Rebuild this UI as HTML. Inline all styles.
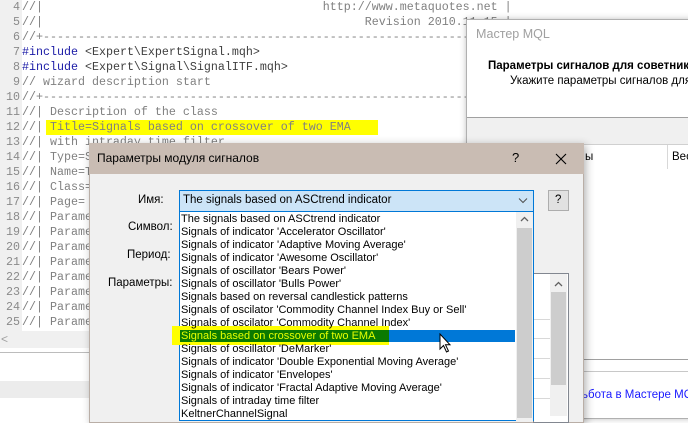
<!DOCTYPE html>
<html><head><meta charset="utf-8"><style>
*{margin:0;padding:0;box-sizing:border-box}
body{width:688px;height:416px;position:relative;overflow:hidden;background:#fff;font-family:"Liberation Sans",sans-serif}
.abs{position:absolute}
#gut{left:0;top:0;width:22px;height:331px;background:#f0f0f0}
.ln{position:absolute;left:0;width:20px;text-align:right;font:11.67px "Liberation Mono",monospace;color:#8a8a8a;line-height:15px}
.cd{position:absolute;left:22px;font:11.67px "Liberation Mono",monospace;color:#808080;line-height:15px;white-space:pre}
.inc{color:#1a1aa6}
.dk{color:#404040}
.ui{font-family:"Liberation Sans","Noto Sans CJK SC",sans-serif;font-size:11.5px;color:#000;white-space:nowrap}
.li{position:absolute;left:181px;height:13px;line-height:13px;font-size:11px;font-family:"Liberation Sans",sans-serif;white-space:nowrap}
</style></head><body>
<div id="gut" class="abs"></div>
<div class="abs" style="left:46px;top:120px;width:332px;height:15px;background:#ffff00"></div>

<div class="ln" style="top:0">4</div><div class="cd" style="top:0">//|                                        http://www.metaquotes.net |</div>
<div class="ln" style="top:15px">5</div><div class="cd" style="top:15px">//|                                              Revision 2010.11.15 |</div>
<div class="ln" style="top:30px">6</div><div class="cd" style="top:30px">//+------------------------------------------------------------------+</div>
<div class="ln" style="top:45px">7</div><div class="cd" style="top:45px"><span class="inc">#include</span> <span class="dk">&lt;Expert\ExpertSignal.mqh&gt;</span></div>
<div class="ln" style="top:60px">8</div><div class="cd" style="top:60px"><span class="inc">#include</span> <span class="dk">&lt;Expert\Signal\SignalITF.mqh&gt;</span></div>
<div class="ln" style="top:75px">9</div><div class="cd" style="top:75px">// wizard description start</div>
<div class="ln" style="top:90px">10</div><div class="cd" style="top:90px">//+------------------------------------------------------------------+</div>
<div class="ln" style="top:105px">11</div><div class="cd" style="top:105px">//| Description of the class</div>
<div class="ln" style="top:120px">12</div><div class="cd" style="top:120px">//| Title=Signals based on crossover of two EMA</div>
<div class="ln" style="top:135px">13</div><div class="cd" style="top:135px">//| with intraday time filter</div>
<div class="ln" style="top:150px">14</div><div class="cd" style="top:150px">//| Type=SignalAdvanced</div>
<div class="ln" style="top:165px">15</div><div class="cd" style="top:165px">//| Name=T</div>
<div class="ln" style="top:180px">16</div><div class="cd" style="top:180px">//| Class=</div>
<div class="ln" style="top:195px">17</div><div class="cd" style="top:195px">//| Page=</div>
<div class="ln" style="top:210px">18</div><div class="cd" style="top:210px">//| Parameter</div>
<div class="ln" style="top:225px">19</div><div class="cd" style="top:225px">//| Parameter</div>
<div class="ln" style="top:240px">20</div><div class="cd" style="top:240px">//| Parameter</div>
<div class="ln" style="top:255px">21</div><div class="cd" style="top:255px">//| Parameter</div>
<div class="ln" style="top:270px">22</div><div class="cd" style="top:270px">//| Parameter</div>
<div class="ln" style="top:285px">23</div><div class="cd" style="top:285px">//| Parameter</div>
<div class="ln" style="top:300px">24</div><div class="cd" style="top:300px">//| Parameter</div>
<div class="ln" style="top:315px">25</div><div class="cd" style="top:315px">//| Parameter</div>

<div class="abs" style="left:0;top:331px;width:100px;height:17px;background:#f0f0f0;color:#a0a0a0;font-size:12px;padding-left:1px;line-height:17px">&lt;</div>
<div class="abs" style="left:0;top:352px;width:100px;height:1px;background:#bcbcbc"></div>
<div class="abs" style="left:0;top:381px;width:100px;height:17px;background:#ececec"></div>

<!-- Master MQL window -->
<div class="abs" style="left:466px;top:19px;width:230px;height:400px;background:#fff;border:1px solid #b0b0b0;box-shadow:0 0 6px rgba(0,0,0,.25)"></div>
<div class="abs ui" style="left:476px;top:27px;color:#a0a0a0;font-size:12.5px">Мастер MQL</div>
<div class="abs ui" style="left:488px;top:60px;font-weight:bold;font-size:11.5px">Параметры сигналов для советника</div>
<div class="abs ui" style="left:510px;top:75px">Укажите параметры сигналов для</div>
<div class="abs" style="left:467px;top:117px;width:230px;height:1px;background:#a0a0a0"></div>
<div class="abs" style="left:467px;top:118px;width:230px;height:26px;background:#f0f0f0"></div>
<div class="abs" style="left:467px;top:144px;width:230px;height:1px;background:#d0d0d0"></div>
<div class="abs" style="left:667px;top:145px;width:1px;height:24px;background:#d8d8d8"></div>
<div class="abs ui" style="left:585px;top:151px">ы</div>
<div class="abs ui" style="left:672px;top:151px">Вес</div>
<div class="abs" style="left:584px;top:359px;width:110px;height:1px;background:#a0a0a0"></div>
<div class="abs" style="left:584px;top:371px;width:110px;height:1px;background:#c8c8c8"></div>
<div class="abs ui" style="left:582px;top:389px;color:#1a1aff">ьбота в Мастере MQL</div>

<!-- Dialog -->
<div class="abs" style="left:89px;top:143px;width:495px;height:280px;background:#f0f0f0;border:1px solid #b9aea6;box-shadow:2px 2px 8px rgba(0,0,0,.3)"></div>
<div class="abs" style="left:89px;top:143px;width:495px;height:31px;background:#c9bcb3"></div>
<div class="abs ui" style="left:97px;top:151px;font-size:12px">Параметры модуля сигналов</div>
<div class="abs ui" style="left:512px;top:150px;font-size:13px">?</div>
<svg class="abs" style="left:555px;top:153px" width="12" height="12"><path d="M1 1L11 11M11 1L1 11" stroke="#000" stroke-width="1.1"/></svg>

<div class="abs ui" style="left:138px;top:194px">Имя:</div>
<div class="abs ui" style="left:128px;top:221px">Символ:</div>
<div class="abs ui" style="left:127px;top:249px">Период:</div>
<div class="abs ui" style="left:108px;top:277px">Параметры:</div>

<div class="abs" style="left:548px;top:190px;width:21px;height:21px;background:#e1e1e1;border:1px solid #adadad"></div>
<div class="abs ui" style="left:555px;top:194px">?</div>

<!-- param grid behind -->
<div class="abs" style="left:533px;top:273px;width:36px;height:150px;background:#fff;border:1px solid #828790"></div>
<div class="abs" style="left:534px;top:319px;width:16px;height:1px;background:#d8d8d8"></div>
<div class="abs" style="left:534px;top:338px;width:16px;height:1px;background:#d8d8d8"></div>
<div class="abs" style="left:534px;top:358px;width:16px;height:1px;background:#d8d8d8"></div>
<div class="abs" style="left:534px;top:378px;width:16px;height:1px;background:#d8d8d8"></div>
<div class="abs" style="left:534px;top:398px;width:16px;height:1px;background:#d8d8d8"></div>
<div class="abs" style="left:550px;top:274px;width:17px;height:142px;background:#f0f0f0"></div>
<div class="abs" style="left:551px;top:292px;width:15px;height:93px;background:#cdcdcd"></div>
<svg class="abs" style="left:554px;top:281px" width="9" height="6"><path d="M1 5L4.5 1.5L8 5" stroke="#606060" fill="none" stroke-width="1.3"/></svg>

<!-- combo -->
<div class="abs" style="left:179px;top:190px;width:355px;height:22px;background:#cce4f7;border:1px solid #0078d7"></div>
<div class="abs ui" style="left:183px;top:194px">The signals based on ASCtrend indicator</div>
<svg class="abs" style="left:518px;top:197px" width="10" height="7"><path d="M1 1.5L5 5.5L9 1.5" stroke="#505050" fill="none" stroke-width="1"/></svg>

<!-- dropdown list -->
<div class="abs" style="left:179px;top:211px;width:355px;height:210px;background:#fff;border:1px solid #0078d7"></div>
<div class="abs" style="left:516px;top:212px;width:17px;height:210px;background:#f0f0f0"></div>
<div class="abs" style="left:517px;top:228px;width:15px;height:190px;background:#cdcdcd"></div>
<svg class="abs" style="left:520px;top:216px" width="9" height="6"><path d="M1 5L4.5 1.5L8 5" stroke="#606060" fill="none" stroke-width="1.3"/></svg>

<div class="abs" style="left:172px;top:326px;width:217px;height:19px;background:#ffff00"></div>
<div class="abs" style="left:180px;top:330px;width:335px;height:12px;background:#0078d7"></div>
<div class="abs" style="left:180px;top:330px;width:209px;height:12px;background:#0b7a00"></div>

<div class="li" style="top:213px">The signals based on ASCtrend indicator</div>
<div class="li" style="top:226px">Signals of indicator 'Accelerator Oscillator'</div>
<div class="li" style="top:239px">Signals of indicator 'Adaptive Moving Average'</div>
<div class="li" style="top:252px">Signals of indicator 'Awesome Oscillator'</div>
<div class="li" style="top:265px">Signals of oscillator 'Bears Power'</div>
<div class="li" style="top:278px">Signals of oscillator 'Bulls Power'</div>
<div class="li" style="top:291px">Signals based on reversal candlestick patterns</div>
<div class="li" style="top:304px">Signals of oscilator 'Commodity Channel Index Buy or Sell'</div>
<div class="li" style="top:317px">Signals of oscilator 'Commodity Channel Index'</div>
<div class="li" style="top:330px;color:#e6ff00">Signals based on crossover of two EMA</div>
<div class="li" style="top:343px">Signals of oscillator 'DeMarker'</div>
<div class="li" style="top:356px">Signals of indicator 'Double Exponential Moving Average'</div>
<div class="li" style="top:369px">Signals of indicator 'Envelopes'</div>
<div class="li" style="top:382px">Signals of indicator 'Fractal Adaptive Moving Average'</div>
<div class="li" style="top:395px">Signals of intraday time filter</div>
<div class="li" style="top:408px">KeltnerChannelSignal</div>

<svg class="abs" style="left:439px;top:333px" width="13" height="21"><path d="M1 1L1 16L4.5 12.5L7.5 19L9.5 18L6.5 11.8L11 11.8Z" fill="#fff" stroke="#000" stroke-width="1"/></svg>
</body></html>
